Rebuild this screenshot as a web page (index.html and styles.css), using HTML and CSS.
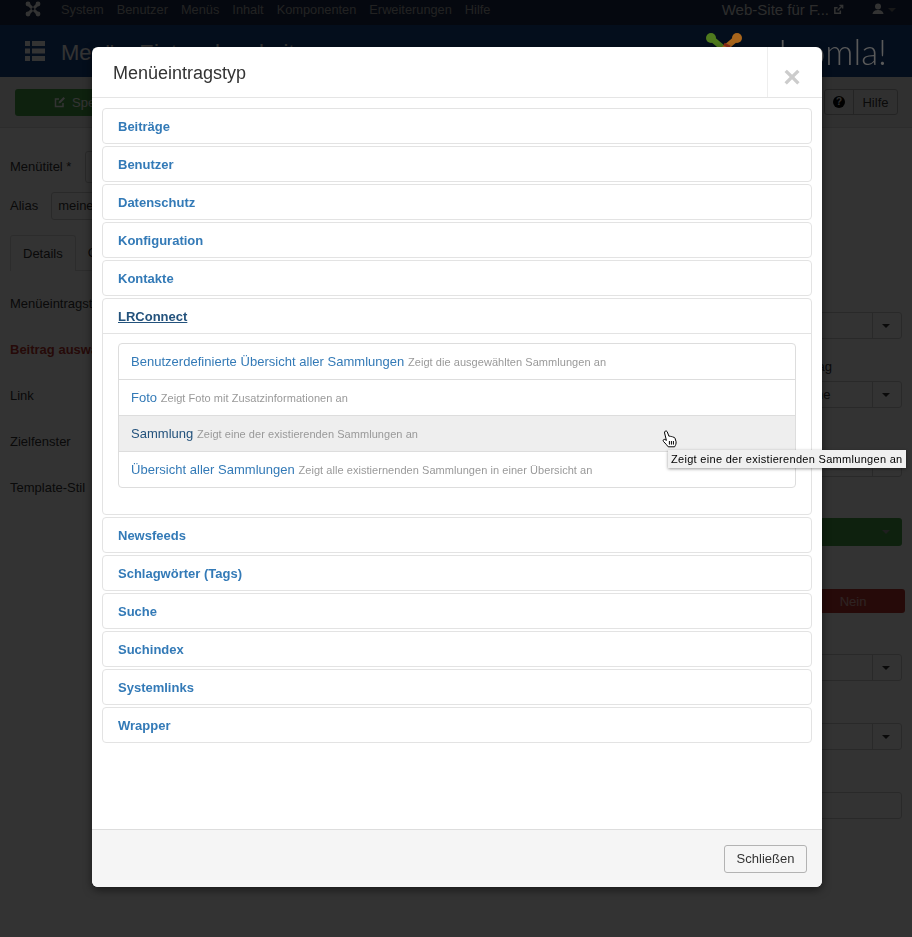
FILE: index.html
```html
<!DOCTYPE html>
<html>
<head>
	<meta charset="utf-8">
	<title>Menüeintragstyp</title>
	<link rel="stylesheet" href="styles.css">
</head>
<body>

<!-- PAGE BEHIND THE DIALOG -->
<div class="topbar">
	<svg class="brand" viewBox="0 0 16 16"><path d="M2 2 L14 14 M14 2 L2 14" stroke="#fff" stroke-width="3"/><circle cx="3" cy="3" r="2.4" fill="#fff"/><circle cx="13" cy="3" r="2.4" fill="#fff"/><circle cx="3" cy="13" r="2.4" fill="#fff"/><circle cx="13" cy="13" r="2.4" fill="#fff"/><circle cx="8" cy="8" r="1.4" fill="#1b2b4a"/></svg>
	<nav class="nav">
		<span>System</span>
		<span>Benutzer</span>
		<span>Menüs</span>
		<span>Inhalt</span>
		<span>Komponenten</span>
		<span>Erweiterungen</span>
		<span>Hilfe</span>
	</nav>
	<div class="site-link">
		<span>Web-Site für F...</span>
		<svg class="ext" viewBox="0 0 12 12"><path d="M8 7 V10 H2 V4 H5" fill="none" stroke="#fff" stroke-width="1.6"/><path d="M5 7 L10 2 M7 1.5 H10.5 V5" fill="none" stroke="#fff" stroke-width="1.6"/></svg>
	</div>
	<svg class="user" viewBox="0 0 12 12"><circle cx="6" cy="3.4" r="3" fill="#fff"/><path d="M0.5 11 C1 7.5 4 7 6 7 C8 7 11 7.5 11.5 11 Z" fill="#fff"/></svg>
	<span class="caret user-caret"></span>
</div>

<div class="titlebar">
	<svg class="title-icon" viewBox="0 0 20 20"><path d="M0 0 H5 V5 H0 Z M7 0 H20 V5 H7 Z M0 7.5 H5 V12.5 H0 Z M7 7.5 H20 V12.5 H7 Z M0 15 H5 V20 H0 Z M7 15 H20 V20 H7 Z" fill="#fff"/></svg>
	<h1 class="page-title">Menüs: Eintrag bearbeiten</h1>
	<div class="logo">
		<svg class="logo-mark" viewBox="0 0 36 36"><path d="M5 5 L18 16" stroke="#4f7a1e" stroke-width="6"/><path d="M31 5 L18 16" stroke="#a8651c" stroke-width="6"/><circle cx="5" cy="5" r="5" fill="#4f7a1e"/><circle cx="31" cy="5" r="5" fill="#a8651c"/><path d="M18 11 L24 14" stroke="#8c2c18" stroke-width="3"/></svg>
		<span class="logo-text">Joomla!</span>
	</div>
</div>

<div class="toolbar">
	<div class="btn-save">
		<svg class="save-icon" viewBox="0 0 12 12"><path d="M9 7 V10.5 H1.5 V3 H5" fill="none" stroke="#fff" stroke-width="1.5"/><path d="M4.5 7.5 L5 5.5 L9.5 1 L11 2.5 L6.5 7 Z" fill="#fff"/></svg>
		<span>Speichern</span>
	</div>
	<div class="help-group">
		<span class="help-icon"><span class="help-dot">?</span></span>
		<span class="help-text">Hilfe</span>
	</div>
</div>

<div class="content">
	<div class="main-col">
		<div class="head-row title-row">
			<label class="head-label">Menütitel *</label>
			<div class="input input-title"></div>
		</div>
		<div class="head-row alias-row">
			<label class="head-label">Alias</label>
			<div class="input input-alias">meine-seite</div>
		</div>
		<div class="tabs">
			<span class="tab tab-active">Details</span>
			<span class="tab">Content</span>
		</div>
		<div class="form-rows">
			<label>Menüeintragstyp</label>
			<label class="required">Beitrag auswählen *</label>
			<label>Link</label>
			<label>Zielfenster</label>
			<label>Template-Stil</label>
		</div>
	</div>
	<div class="side-col">
		<div class="select first"></div>
		<label class="side-label">Übergeordneter Eintrag</label>
		<div class="select after-label"><span class="select-value">Oberste Ebene</span></div>
		<div class="select"></div>
		<div class="status"><span class="caret"></span></div>
		<div class="toggle"><span class="toggle-on"></span><span class="toggle-off">Nein</span></div>
		<div class="select"></div>
		<div class="select"></div>
		<div class="input side-input"></div>
	</div>
</div>

<div class="backdrop"></div>

<!-- DIALOG -->
<div class="modal">
	<div class="modal-header">
		<h3 class="modal-title">Menüeintragstyp</h3>
		<button class="modal-close">×</button>
	</div>
	<div class="modal-body">
		<div class="panel"><a class="panel-link">Beiträge</a></div>
		<div class="panel"><a class="panel-link">Benutzer</a></div>
		<div class="panel"><a class="panel-link">Datenschutz</a></div>
		<div class="panel"><a class="panel-link">Konfiguration</a></div>
		<div class="panel"><a class="panel-link">Kontakte</a></div>
		<div class="panel open">
			<a class="panel-link active">LRConnect</a>
			<div class="panel-body">
				<ul class="type-list">
					<li><a>Benutzerdefinierte Übersicht aller Sammlungen</a> <small>Zeigt die ausgewählten Sammlungen an</small></li>
					<li><a>Foto</a> <small>Zeigt Foto mit Zusatzinformationen an</small></li>
					<li class="hover"><a>Sammlung</a> <small>Zeigt eine der existierenden Sammlungen an</small></li>
					<li><a>Übersicht aller Sammlungen</a> <small>Zeigt alle existiernenden Sammlungen in einer Übersicht an</small></li>
				</ul>
			</div>
		</div>
		<div class="panel"><a class="panel-link">Newsfeeds</a></div>
		<div class="panel"><a class="panel-link">Schlagwörter (Tags)</a></div>
		<div class="panel"><a class="panel-link">Suche</a></div>
		<div class="panel"><a class="panel-link">Suchindex</a></div>
		<div class="panel"><a class="panel-link">Systemlinks</a></div>
		<div class="panel"><a class="panel-link">Wrapper</a></div>
	</div>
	<div class="modal-footer">
		<button class="btn-close">Schließen</button>
	</div>
</div>

<!-- POINTER AND NATIVE TOOLTIP -->
<svg class="pointer" viewBox="0 0 15 18"><path d="M3.2 1.2 C4.2 0.6 5 1.2 5.3 2 L7 6.4 C7.6 5.9 8.6 6 9 6.8 C9.6 6.3 10.6 6.5 11 7.3 C11.7 7 12.6 7.3 13 8.2 L14 11.5 C14.4 13.6 13.6 15.2 12.6 16.8 L6.2 16.8 C5 15.2 3.4 13.4 1.6 11.6 C0.6 10.4 1.4 9 2.8 9.4 L4.4 10.4 L2.6 3 C2.4 2.2 2.6 1.6 3.2 1.2 Z" fill="#fff" stroke="#000" stroke-width="1" stroke-linejoin="round"/><path d="M7.4 11 V14.6 M9.4 11 V14.6 M11.4 11 V14.6" stroke="#000" stroke-width="1"/></svg>
<div class="tooltip">Zeigt eine der existierenden Sammlungen an</div>

</body>
</html>
```

FILE: styles.css
```css
html, body {
	margin: 0;
	height: 100%;
}
body {
	background-color: white;
	color: #333;
	font-family: "Liberation Sans", Arial, sans-serif;
	font-size: 13px;
	overflow: hidden;
}

/* page behind the dialog */
.topbar {
	display: flex;
	align-items: center;
	height: 25px;
	background-color: #1b2b4a;
	color: white;
	padding: 0 0 0 25px;
}
.brand {
	width: 16px;
	height: 16px;
	margin-top: -8px;
}
.nav {
	display: flex;
	gap: 13px;
	margin-left: 20px;
	margin-top: -7px;
	font-size: 12.8px;
	color: #aaa;
}
.site-link {
	display: flex;
	align-items: center;
	gap: 4px;
	margin-left: auto;
	margin-top: -7px;
	font-size: 15px;
	color: #ddd;
}
.ext {
	width: 11px;
	height: 11px;
}
.user {
	width: 12px;
	height: 12px;
	margin: -8px 0 0 28px;
}
.caret {
	display: block;
	width: 0;
	height: 0;
	border-left: 4px solid transparent;
	border-right: 4px solid transparent;
	border-top: 4px solid #333;
}
.user-caret {
	border-top-color: #777;
	margin: -6px 16px 0 4px;
}

.titlebar {
	display: flex;
	align-items: center;
	height: 52px;
	background-color: #18458c;
	color: white;
	padding: 0 25px;
	overflow: hidden;
}
.title-icon {
	width: 20px;
	height: 20px;
}
.page-title {
	margin: 3px 0 0 16px;
	font-size: 22px;
	font-weight: normal;
}
.logo {
	display: flex;
	margin-left: auto;
	align-items: flex-start;
	margin-top: 8px;
	height: 44px;
	position: relative;
	z-index: 1;
}
.logo-mark {
	width: 36px;
	height: 36px;
}
.logo-text {
	font-family: "Lato", sans-serif;
	font-weight: 300;
	font-size: 35px;
	line-height: 36px;
	margin-left: 30px;
	color: #5a5a5a;
}

.toolbar {
	display: flex;
	justify-content: space-between;
	align-items: center;
	height: 50px;
	background-color: #f0f0f0;
	border-bottom: 1px solid #ddd;
	padding: 0 14px 0 15px;
}
.btn-save {
	display: flex;
	align-items: center;
	gap: 6px;
	width: 200px;
	height: 27px;
	box-sizing: border-box;
	padding-left: 39px;
	background-color: #46a546;
	border-radius: 3px;
	color: white;
}
.save-icon {
	width: 12px;
	height: 12px;
}
.help-group {
	display: flex;
	height: 24px;
	border: 1px solid #b3b3b3;
	border-radius: 3px;
	align-items: center;
}
.help-icon {
	display: flex;
	justify-content: center;
	align-items: center;
	width: 29px;
	height: 24px;
	box-sizing: border-box;
	border-right: 1px solid #b3b3b3;
}
.help-dot {
	width: 12px;
	height: 12px;
	border-radius: 50%;
	background-color: #000;
	color: #f0f0f0;
	font-size: 10px;
	font-weight: bold;
	line-height: 12px;
	text-align: center;
}
.help-text {
	width: 43px;
	text-align: center;
}

.content {
	display: flex;
	justify-content: space-between;
	padding: 0 10px;
}
.main-col {
	width: 400px;
}
.head-row {
	display: flex;
	align-items: center;
	gap: 14px;
}
.head-label {
	margin-bottom: 2px;
}
.title-row {
	margin-top: 23px;
}
.alias-row {
	margin-top: 9px;
	gap: 13px;
}
.input {
	box-sizing: border-box;
	border: 1px solid #ccc;
	border-radius: 3px;
	background-color: white;
}
.input-title {
	height: 32px;
	width: 200px;
}
.input-alias {
	height: 28px;
	width: 200px;
	line-height: 26px;
	padding-left: 6px;
}
.tabs {
	display: flex;
	height: 35px;
	margin-top: 15px;
	border-bottom: 1px solid #ddd;
}
.tab {
	box-sizing: border-box;
	height: 36px;
	padding: 10px 12px;
}
.tab-active {
	background-color: white;
	border: 1px solid #ddd;
	border-bottom: 0;
	border-radius: 3px 3px 0 0;
}
.form-rows {
	display: flex;
	flex-direction: column;
	gap: 31px;
	padding-top: 25px;
}
.form-rows label {
	display: block;
	line-height: 15px;
}
.required {
	color: #bd362f;
	font-weight: bold;
}

.side-col {
	width: 206px;
	padding-top: 184px;
}
.select {
	position: relative;
	box-sizing: border-box;
	height: 27px;
	margin-top: 42px;
	border: 1px solid #ccc;
	border-radius: 3px;
	background-color: white;
	line-height: 25px;
}
.select::before {
	content: "";
	position: absolute;
	right: 28px;
	top: 0;
	bottom: 0;
	border-left: 1px solid #ccc;
}
.select::after {
	content: "";
	position: absolute;
	right: 11px;
	top: 11px;
	border-left: 4px solid transparent;
	border-right: 4px solid transparent;
	border-top: 4px solid #333;
}
.select.first {
	margin-top: 0;
}
.select.after-label {
	margin-top: 7px;
}
.select-value {
	padding-left: 46px;
}
.side-label {
	display: block;
	line-height: 14px;
	margin-top: 21px;
}
.status {
	display: flex;
	justify-content: flex-end;
	align-items: center;
	height: 28px;
	margin-top: 41px;
	padding-right: 12px;
	box-sizing: border-box;
	background-color: #46a546;
	border-radius: 3px;
}
.status .caret {
	border-top-color: #999;
}
.toggle {
	display: flex;
	height: 24px;
	margin: 43px -3px 0 0;
	border-radius: 3px;
	background-color: #bd362f;
	color: #fff;
	line-height: 25px;
}
.toggle-on {
	flex: 1;
}
.toggle-off {
	width: 104px;
	text-align: center;
	opacity: .6;
}
.toggle + .select {
	margin-top: 41px;
}
.side-input {
	height: 27px;
	margin-top: 42px;
}

.backdrop {
	position: fixed;
	top: 0;
	left: 0;
	right: 0;
	bottom: 0;
	background-color: rgba(0,0,0,.8);
}

/* dialog */
.modal {
	position: fixed;
	left: 92px;
	top: 47px;
	z-index: 2;
	width: 730px;
	height: 840px;
	display: flex;
	flex-direction: column;
	background-color: white;
	border-radius: 6px;
	box-shadow: 0 3px 9px rgba(0,0,0,.5);
	overflow: hidden;
}
.modal-header {
	display: flex;
	justify-content: space-between;
	height: 50px;
	border-bottom: 1px solid #e5e5e5;
	flex: none;
}
.modal-title {
	margin: 0 0 0 21px;
	font-size: 18px;
	font-weight: normal;
	line-height: 52px;
}
.modal-close {
	width: 55px;
	padding: 10px 6px 0 0;
	border: 0;
	border-left: 1px solid #eee;
	background: none;
	color: #ccc;
	font-family: "Liberation Sans", Arial, sans-serif;
	font-size: 30px;
	font-weight: bold;
	text-align: center;
}
.modal-body {
	flex: 1;
	padding: 10px 10px 0;
}
.panel {
	margin-bottom: 2px;
	border: 1px solid #e3e3e3;
	border-radius: 4px;
}
.panel-link {
	display: block;
	height: 34px;
	padding-left: 15px;
	font-size: 13px;
	font-weight: bold;
	line-height: 35px;
	color: #337ab7;
}
.panel-link.active {
	height: 34px;
	color: #23527c;
	text-decoration: underline;
	border-bottom: 1px solid #e3e3e3;
}
.panel-body {
	padding: 9px 15px 26px;
}
.type-list {
	list-style: none;
	margin: 0;
	padding: 0;
	border: 1px solid #ddd;
	border-radius: 4px;
}
.type-list li {
	height: 35px;
	padding-left: 12px;
	border-bottom: 1px solid #ddd;
	line-height: 35px;
	color: #337ab7;
	letter-spacing: .02px;
}
.type-list li:last-child {
	border-bottom: 0;
}
.type-list li.hover {
	background-color: #eee;
	color: #23527c;
}
.type-list small {
	font-size: 11px;
	color: #999;
	letter-spacing: .05px;
}
.modal-footer {
	display: flex;
	justify-content: flex-end;
	align-items: center;
	flex: none;
	height: 57px;
	padding-right: 15px;
	background-color: #f5f5f5;
	border-top: 1px solid #ddd;
}
.btn-close {
	width: 83px;
	height: 28px;
	padding: 0;
	background-color: #f5f5f5;
	border: 1px solid #b3b3b3;
	border-radius: 3px;
	color: #333;
	font-family: "Liberation Sans", Arial, sans-serif;
	font-size: 13px;
}

/* pointer and native tooltip */
.pointer {
	position: fixed;
	left: 662px;
	top: 430px;
	z-index: 3;
	width: 15px;
	height: 18px;
}
.tooltip {
	position: fixed;
	left: 668px;
	top: 450px;
	z-index: 3;
	width: 238px;
	height: 18px;
	box-sizing: border-box;
	padding-left: 3px;
	background-color: #f0f0f0;
	box-shadow: 0 1px 3px rgba(0,0,0,.4);
	color: black;
	font-size: 11px;
	letter-spacing: .3px;
	line-height: 18px;
	white-space: nowrap;
}
```
